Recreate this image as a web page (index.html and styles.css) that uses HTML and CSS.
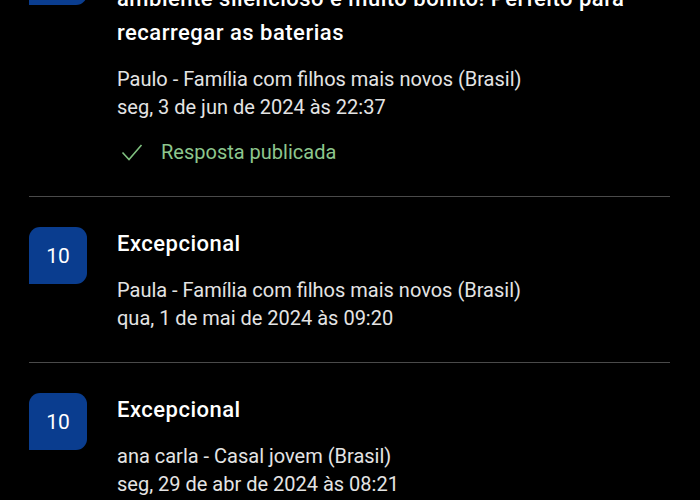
FILE: index.html
```html
<!DOCTYPE html>
<html lang="pt-BR">
<head>
    <meta charset="UTF-8">
    <meta name="viewport" content="width=device-width, initial-scale=1.0">
    <title>Avaliações</title>
    <link rel="stylesheet" href="styles.css">
</head>
<body>

    <ul class="reviews">
        <li class="review">
            <div class="score">10</div>
            <div class="review-body">
                <h3 class="review-title">Quarto confortável, equipe atenciosa,<br>ambiente silencioso e muito bonito! Perfeito para recarregar as baterias</h3>
                <p class="review-meta">Paulo - Família com filhos mais novos (Brasil)</p>
                <p class="review-meta">seg, 3 de jun de 2024 às 22:37</p>
                <div class="reply-status">
                    <svg class="check" width="22" height="17" viewBox="0 0 22 17">
                        <path d="M1.5 8.5 L8 15.5 L20.5 1" fill="none" stroke="currentColor" stroke-width="1.6"/>
                    </svg>
                    <span>Resposta publicada</span>
                </div>
            </div>
        </li>
        <li class="review">
            <div class="score">10</div>
            <div class="review-body">
                <h3 class="review-title">Excepcional</h3>
                <p class="review-meta">Paula - Família com filhos mais novos (Brasil)</p>
                <p class="review-meta">qua, 1 de mai de 2024 às 09:20</p>
            </div>
        </li>
        <li class="review">
            <div class="score">10</div>
            <div class="review-body">
                <h3 class="review-title">Excepcional</h3>
                <p class="review-meta">ana carla - Casal jovem (Brasil)</p>
                <p class="review-meta">seg, 29 de abr de 2024 às 08:21</p>
            </div>
        </li>
    </ul>

</body>
</html>
```

FILE: styles.css
```css
body {
    margin: 0;
    background-color: #000;
    color: #fff;
    font-family: Roboto, "Noto Sans", sans-serif;
    overflow: hidden;
}
.reviews {
    list-style: none;
    margin: -82px 30px 0 29px;
    padding: 0;
}
.review {
    display: flex;
    gap: 30px;
    padding: 30px 0 30px 0;
    border-bottom: 1px solid #4a4a4a;
}
.score {
    flex: 0 0 58px;
    height: 57px;
    background-color: #0a3d8f;
    border-radius: 11px 11px 11px 0;
    display: flex;
    align-items: center;
    justify-content: center;
    font-size: 21px;
    color: #fff;
}
.review-body {
    flex: 1;
}
.review-title {
    margin: 0 0 15px 0;
    font-size: 22px;
    font-weight: 500;
    line-height: 34px;
    letter-spacing: 0.5px;
    color: #fff;
}
.review-meta {
    margin: 0;
    font-size: 20px;
    line-height: 28px;
    color: #e4e4e4;
}
.reply-status {
    display: flex;
    align-items: center;
    gap: 18px;
    margin-top: 17px;
    margin-left: 4px;
    font-size: 20px;
    line-height: 28px;
    color: #8dc68d;
}
.check {
    color: #7fc07f;
}
```
